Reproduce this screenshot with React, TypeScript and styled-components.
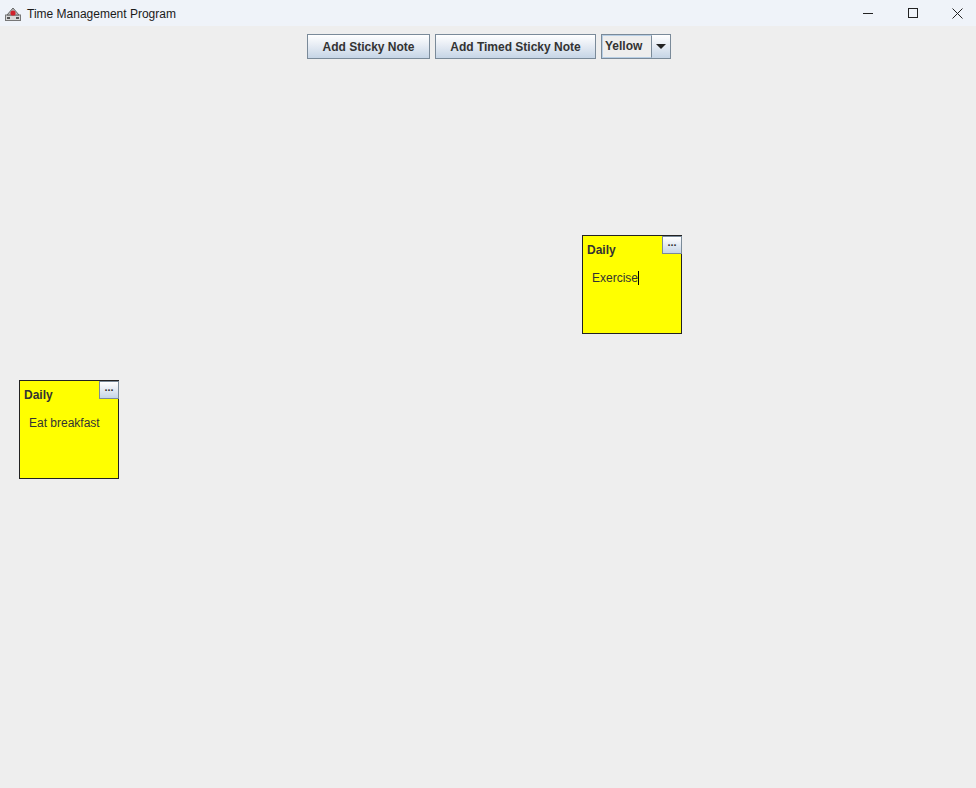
import { createGlobalStyle } from "styled-components";
import styled from "styled-components";

const GlobalStyle = createGlobalStyle`
  html, body {
    margin: 0;
    padding: 0;
    background: #eeeeee;
  }
  #root {
    width: 976px;
    height: 788px;
  }
`;

const Window = styled.div`
  width: 976px;
  height: 788px;
  display: flex;
  flex-direction: column;
  background: #eeeeee;
  overflow: hidden;
`;

const TitleBar = styled.div`
  height: 26px;
  flex: none;
  display: flex;
  align-items: center;
  background: #eff3f9;
  font-family: "Liberation Sans", Arial, sans-serif;
  font-size: 12px;
  color: #1a1a1a;
  overflow: hidden;
`;

const AppIcon = styled.div`
  width: 16px;
  height: 16px;
  margin: 0 6px 0 5px;
  display: flex;
`;

const Title = styled.span`
  flex: 1;
  padding-top: 1px;
`;

const WinButton = styled.div`
  width: 45px;
  height: 26px;
  flex: none;
  display: flex;
  align-items: center;
  justify-content: center;
  color: #222;
  &:last-child {
    margin-right: -4px;
  }
`;

const Toolbar = styled.div`
  display: flex;
  justify-content: center;
  gap: 5px;
  padding: 8px 0 0 2px;
  height: 25px;
`;

const MetalButton = styled.button<{ $w: number }>`
  width: ${(p) => p.$w}px;
  height: 25px;
  box-sizing: border-box;
  border: 1px solid #7a8a99;
  border-radius: 0;
  background: linear-gradient(#ffffff 0%, #e9eef5 40%, #c6d5e6 100%);
  font-family: "Liberation Sans", Arial, sans-serif;
  font-weight: bold;
  font-size: 12px;
  color: #333333;
  padding: 0;
  padding-top: 1px;
`;

const Combo = styled.div`
  display: flex;
  height: 25px;
  box-sizing: border-box;
  border: 1px solid #7a8a99;
  width: 70px;
`;

const ComboValue = styled.div`
  flex: 1;
  display: flex;
  align-items: center;
  padding-left: 2px;
  background: #eeeeee;
  border: 1px solid #b8cfe5;
  border-right: 1px solid #7a8a99;
  font-family: "Liberation Sans", Arial, sans-serif;
  font-weight: bold;
  font-size: 12px;
  color: #333333;
  padding-bottom: 2px;
`;

const ComboArrow = styled.div`
  width: 18px;
  display: flex;
  align-items: center;
  justify-content: center;
  background: linear-gradient(#ffffff 0%, #e9eef5 40%, #c6d5e6 100%);
`;

const Canvas = styled.div`
  position: relative;
  flex: 1;
`;

const Note = styled.div<{ $x: number; $y: number }>`
  position: absolute;
  left: ${(p) => p.$x}px;
  top: ${(p) => p.$y}px;
  width: 100px;
  height: 99px;
  box-sizing: border-box;
  background: #ffff00;
  border: 1px solid #222222;
  font-family: "Liberation Sans", Arial, sans-serif;
  color: #333333;
`;

const NoteTitle = styled.div`
  font-weight: bold;
  font-size: 12px;
  padding: 7px 0 0 4px;
`;

const NoteText = styled.div`
  font-size: 12px;
  padding: 14px 0 0 9px;
  display: flex;
  align-items: center;
`;

const Caret = styled.span`
  display: inline-block;
  width: 1px;
  height: 14px;
  background: #000;
`;

const MenuButton = styled.div`
  position: absolute;
  top: 0;
  right: -1px;
  width: 20px;
  height: 18px;
  box-sizing: border-box;
  border: 1px solid #7a8a99;
  background: linear-gradient(#ffffff 0%, #e9eef5 40%, #c6d5e6 100%);
  font-family: "Liberation Sans", Arial, sans-serif;
  font-weight: bold;
  font-size: 11px;
  line-height: 11px;
  color: #333;
  text-align: center;
`;

function JavaIcon() {
  return (
    <svg width="16" height="16" viewBox="0 0 16 16">
      <rect x="0.5" y="10" width="15" height="5.5" fill="#d8d8d8" stroke="#777" />
      <path d="M2 10 L8 3 L14 10 Z" fill="#bcbcbc" stroke="#666" />
      <circle cx="8" cy="8" r="2.6" fill="#d0202a" />
      <rect x="2" y="12" width="3" height="2" fill="#555" />
      <rect x="11" y="12" width="3" height="2" fill="#555" />
    </svg>
  );
}

type NoteData = { x: number; y: number; title: string; text: string; focused?: boolean };

const notes: NoteData[] = [
  { x: 582, y: 176, title: "Daily", text: "Exercise", focused: true },
  { x: 19, y: 321, title: "Daily", text: "Eat breakfast" },
];

export default function App() {
  return (
    <>
      <GlobalStyle />
      <Window>
        <TitleBar>
          <AppIcon>
            <JavaIcon />
          </AppIcon>
          <Title>Time Management Program</Title>
          <WinButton>
            <svg width="10" height="10" viewBox="0 0 10 10">
              <path d="M0 5.5 H10" stroke="#222" strokeWidth="1" />
            </svg>
          </WinButton>
          <WinButton>
            <svg width="10" height="10" viewBox="0 0 10 10">
              <rect x="0.5" y="0.5" width="9" height="9" fill="none" stroke="#222" strokeWidth="1" />
            </svg>
          </WinButton>
          <WinButton>
            <svg width="11" height="11" viewBox="0 0 11 11">
              <path d="M0.5 0.5 L10.5 10.5 M10.5 0.5 L0.5 10.5" stroke="#222" strokeWidth="1" />
            </svg>
          </WinButton>
        </TitleBar>
        <Toolbar>
          <MetalButton $w={123}>Add Sticky Note</MetalButton>
          <MetalButton $w={161}>Add Timed Sticky Note</MetalButton>
          <Combo>
            <ComboValue>Yellow</ComboValue>
            <ComboArrow>
              <svg width="10" height="6" viewBox="0 0 10 6">
                <path d="M0 0 H10 L5 5 Z" fill="#222" />
              </svg>
            </ComboArrow>
          </Combo>
        </Toolbar>
        <Canvas>
          {notes.map((n, i) => (
            <Note key={i} $x={n.x} $y={n.y}>
              <NoteTitle>{n.title}</NoteTitle>
              <NoteText>
                {n.text}
                {n.focused && <Caret />}
              </NoteText>
              <MenuButton>...</MenuButton>
            </Note>
          ))}
        </Canvas>
      </Window>
    </>
  );
}
